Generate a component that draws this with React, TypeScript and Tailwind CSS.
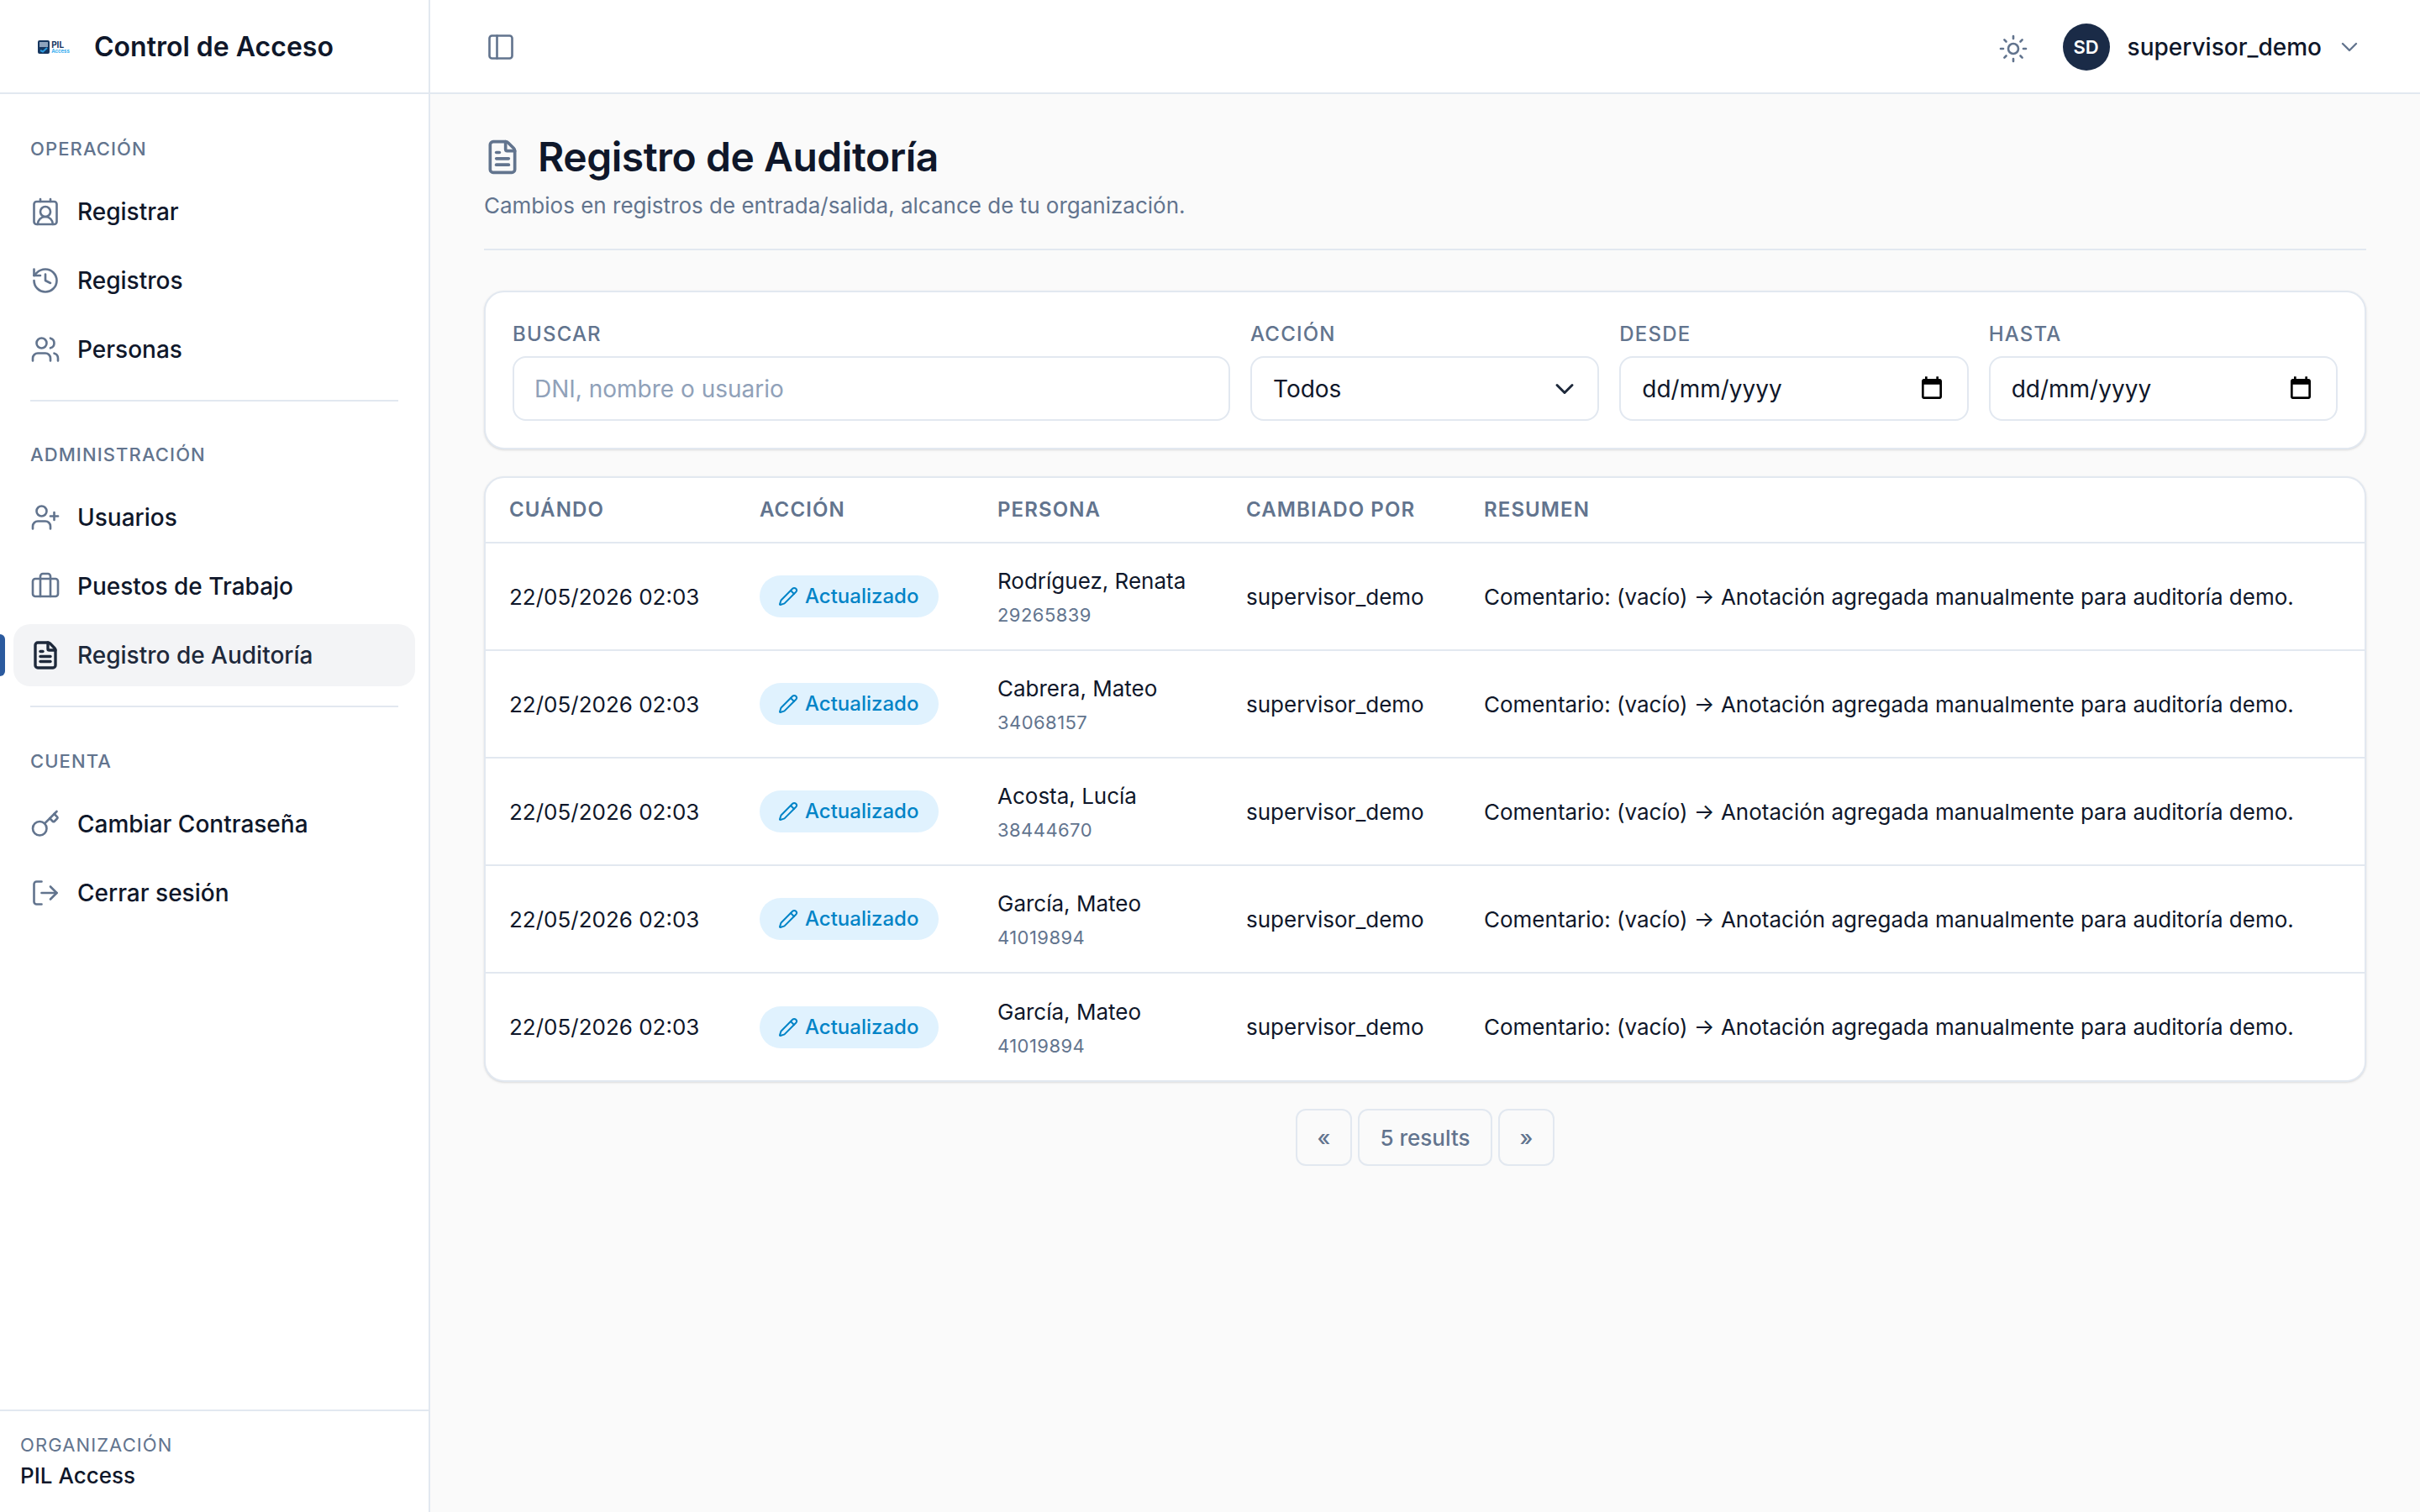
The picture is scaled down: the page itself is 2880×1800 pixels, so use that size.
import React from "react";
import {
    Briefcase,
    ChevronDown,
    ContactRound,
    FileText,
    History,
    Key,
    LogOut,
    PanelLeft,
    Pencil,
    Sun,
    UserPlus,
    Users,
} from "lucide-react";

const rows = [
    { name: "Rodríguez, Renata", dni: "29265839" },
    { name: "Cabrera, Mateo", dni: "34068157" },
    { name: "Acosta, Lucía", dni: "38444670" },
    { name: "García, Mateo", dni: "41019894" },
    { name: "García, Mateo", dni: "41019894" },
];

function Logo() {
    return (
        <div className="flex h-[28px] w-[54px] items-center justify-center gap-[2px] bg-white">
            <svg width="14" height="16" viewBox="0 0 14 16" className="shrink-0">
                <rect width="14" height="16" rx="2" fill="#16365f" />
                <rect x="2" y="2" width="10" height="6" fill="#8ea3bd" />
                <path d="M3 12l3 1.5L11 9" stroke="#2b9be0" strokeWidth="2" fill="none" />
            </svg>
            <div className="flex flex-col font-bold leading-none">
                <span className="text-[10px] leading-[9px] text-[#16365f]">PIL</span>
                <span className="text-[6px] leading-[6px] text-[#38aef0]">Access</span>
            </div>
        </div>
    );
}

function SectionLabel({ children }: { children: React.ReactNode }) {
    return <p className="mb-[22px] px-5 text-[22px] leading-8 font-medium tracking-[1.1px] text-slate-500">{children}</p>;
}

interface NavItemProps {
    icon: React.ElementType;
    label: string;
    active?: boolean;
}

function NavItem({ icon: Icon, label, active }: NavItemProps) {
    return (
        <a
            className={`relative flex h-[74px] items-center gap-[20px] rounded-[20px] pl-[20px] text-[28px] font-medium ${
                active ? "bg-[#f3f4f6] text-[#1e293b]" : "text-[#0f172a]"
            }`}
        >
            {active && <span className="absolute top-[12px] left-[-16px] h-[50px] w-[6px] rounded-r-md bg-[#2b5a9e]" />}
            <Icon size={36} strokeWidth={active ? 2.25 : 1.75} className={active ? "text-[#1e293b]" : "text-slate-500"} />
            {label}
        </a>
    );
}

function Sidebar() {
    return (
        <aside className="flex h-full w-[512px] shrink-0 flex-col border-r-2 border-slate-200 bg-white">
            <div className="flex h-[112px] items-center gap-[21px] border-b-2 border-slate-200 pt-[2px] pl-[37px]">
                <Logo />
                <span className="text-[32px] font-semibold text-[#0f172a]">Control de Acceso</span>
            </div>
            <nav className="flex-1 px-4 pt-[49px]">
                <SectionLabel>OPERACIÓN</SectionLabel>
                <div className="flex flex-col gap-2">
                    <NavItem icon={ContactRound} label="Registrar" />
                    <NavItem icon={History} label="Registros" />
                    <NavItem icon={Users} label="Personas" />
                </div>
                <div className="mx-5 mt-[23px] mb-[47px] h-[2px] bg-slate-200" />
                <SectionLabel>ADMINISTRACIÓN</SectionLabel>
                <div className="flex flex-col gap-2">
                    <NavItem icon={UserPlus} label="Usuarios" />
                    <NavItem icon={Briefcase} label="Puestos de Trabajo" />
                    <NavItem icon={FileText} label="Registro de Auditoría" active />
                </div>
                <div className="mx-5 mt-[23px] mb-12 h-[2px] bg-slate-200" />
                <SectionLabel>CUENTA</SectionLabel>
                <div className="flex flex-col gap-2">
                    <NavItem icon={Key} label="Cambiar Contraseña" />
                    <NavItem icon={LogOut} label="Cerrar sesión" />
                </div>
            </nav>
            <div className="h-[122px] border-t-2 border-slate-200 px-6 pt-6">
                <p className="text-[22px] leading-8 tracking-[1.1px] text-slate-500">ORGANIZACIÓN</p>
                <p className="mt-[1px] text-[26px] leading-10 font-medium text-[#0f172a]">PIL Access</p>
            </div>
        </aside>
    );
}

function TopBar() {
    return (
        <header className="flex h-[112px] shrink-0 items-center justify-between border-b-2 border-slate-200 bg-white pt-[2px] pr-[68px] pl-[66px]">
            <PanelLeft size={36} strokeWidth={1.75} className="text-slate-500" />
            <div className="flex items-center">
                <Sun size={36} strokeWidth={1.75} className="mt-1 text-slate-500" />
                <div className="ml-[41px] flex h-14 w-14 items-center justify-center rounded-full bg-[#1a2b47] text-[22px] font-semibold text-white">
                    SD
                </div>
                <span className="ml-[21px] text-[28px] font-medium text-[#0f172a]">supervisor_demo</span>
                <ChevronDown size={32} strokeWidth={1.75} className="ml-[17px] text-slate-500" />
            </div>
        </header>
    );
}

function FieldLabel({ children }: { children: React.ReactNode }) {
    return <label className="mb-[10px] block text-2xl leading-8 font-medium tracking-[1.2px] text-slate-500">{children}</label>;
}

function DateField({ label }: { label: string }) {
    return (
        <div>
            <FieldLabel>{label}</FieldLabel>
            <div className="flex h-[77px] items-center justify-between rounded-2xl border-2 border-slate-200 bg-white pr-[26px] pl-[25px] text-[28px] text-[#0f172a]">
                dd/mm/yyyy
                <svg width="32" height="32" viewBox="0 0 24 24" fill="#000">
                    <path d="M19 3h-1V1h-2v2H8V1H6v2H5c-1.11 0-1.99.9-1.99 2L3 19c0 1.1.89 2 2 2h14c1.1 0 2-.9 2-2V5c0-1.1-.9-2-2-2zm0 16H5V8h14v11z" />
                </svg>
            </div>
        </div>
    );
}

function Filters() {
    return (
        <section className="grid grid-cols-[854px_1fr_1fr_1fr] gap-6 rounded-3xl border-2 border-slate-200 bg-white px-8 pt-[34px] pb-[32px] shadow-sm">
            <div>
                <FieldLabel>BUSCAR</FieldLabel>
                <input
                    placeholder="DNI, nombre o usuario"
                    className="h-[77px] w-full rounded-2xl border-2 border-slate-200 bg-white px-[24px] text-[28px] text-[#0f172a] placeholder:text-slate-400"
                />
            </div>
            <div>
                <FieldLabel>ACCIÓN</FieldLabel>
                <div className="flex h-[77px] items-center justify-between rounded-2xl border-2 border-slate-200 bg-white pr-[21px] pl-[25px] text-[28px] text-[#0f172a]">
                    Todos
                    <ChevronDown size={36} strokeWidth={2} className="text-[#1e293b]" />
                </div>
            </div>
            <DateField label="DESDE" />
            <DateField label="HASTA" />
        </section>
    );
}

function AuditTable() {
    const th = "px-7 text-left text-2xl font-semibold tracking-[1.1px] text-slate-500";
    return (
        <section className="mt-[32px] overflow-hidden rounded-3xl border-2 border-slate-200 bg-white shadow-sm">
            <table className="w-full table-fixed border-collapse">
                <colgroup>
                    <col className="w-[298px]" />
                    <col className="w-[283px]" />
                    <col className="w-[296px]" />
                    <col className="w-[283px]" />
                    <col />
                </colgroup>
                <thead>
                    <tr className="h-[77px]">
                        <th className={th}>CUÁNDO</th>
                        <th className={th}>ACCIÓN</th>
                        <th className={th}>PERSONA</th>
                        <th className={th}>CAMBIADO POR</th>
                        <th className={th}>RESUMEN</th>
                    </tr>
                </thead>
                <tbody className="text-[26px] text-[#0f172a]">
                    {rows.map((row, i) => (
                        <tr key={i} className="h-[128px] border-t-2 border-slate-200">
                            <td className="px-7 whitespace-nowrap">22/05/2026 02:03</td>
                            <td className="px-7">
                                <span className="inline-flex h-[50px] items-center gap-2 rounded-full bg-[#e0f2fe] pr-[24px] pl-[22px] text-2xl font-medium text-[#0284c7]">
                                    <Pencil size={24} strokeWidth={2} />
                                    Actualizado
                                </span>
                            </td>
                            <td className="px-7 whitespace-nowrap">
                                <p className="leading-10">{row.name}</p>
                                <p className="mt-1 text-[22px] leading-8 tracking-[0.44px] text-slate-500">{row.dni}</p>
                            </td>
                            <td className="px-7">supervisor_demo</td>
                            <td className="px-7 whitespace-nowrap">Comentario: (vacío) → Anotación agregada manualmente para auditoría demo.</td>
                        </tr>
                    ))}
                </tbody>
            </table>
        </section>
    );
}

function Pagination() {
    const btn = "flex h-[68px] items-center justify-center rounded-xl border-2 border-slate-200 text-[26px] font-medium text-slate-500";
    return (
        <div className="mt-8 flex justify-center gap-[7px]">
            <button className={`${btn} w-[67px]`}>«</button>
            <button className={`${btn} w-[160px]`}>5 results</button>
            <button className={`${btn} w-[67px]`}>»</button>
        </div>
    );
}

export default function App() {
    return (
        <div className="flex h-[1800px] w-[2880px] overflow-hidden bg-[#fafafa] font-['Inter',sans-serif]">
            <Sidebar />
            <div className="flex min-w-0 flex-1 flex-col">
                <TopBar />
                <main className="flex-1 px-16 pt-[45px]">
                    <div className="flex items-center gap-[20px]">
                        <FileText size={44} strokeWidth={2} className="text-slate-500" />
                        <h1 className="text-5xl leading-[60px] font-semibold tracking-[-0.48px] text-[#0f172a]">Registro de Auditoría</h1>
                    </div>
                    <p className="mt-2 text-[26px] leading-10 text-slate-500">Cambios en registros de entrada/salida, alcance de tu organización.</p>
                    <div className="mt-[31px] mb-[48px] h-[2px] bg-slate-200" />
                    <Filters />
                    <AuditTable />
                    <Pagination />
                </main>
            </div>
        </div>
    );
}
